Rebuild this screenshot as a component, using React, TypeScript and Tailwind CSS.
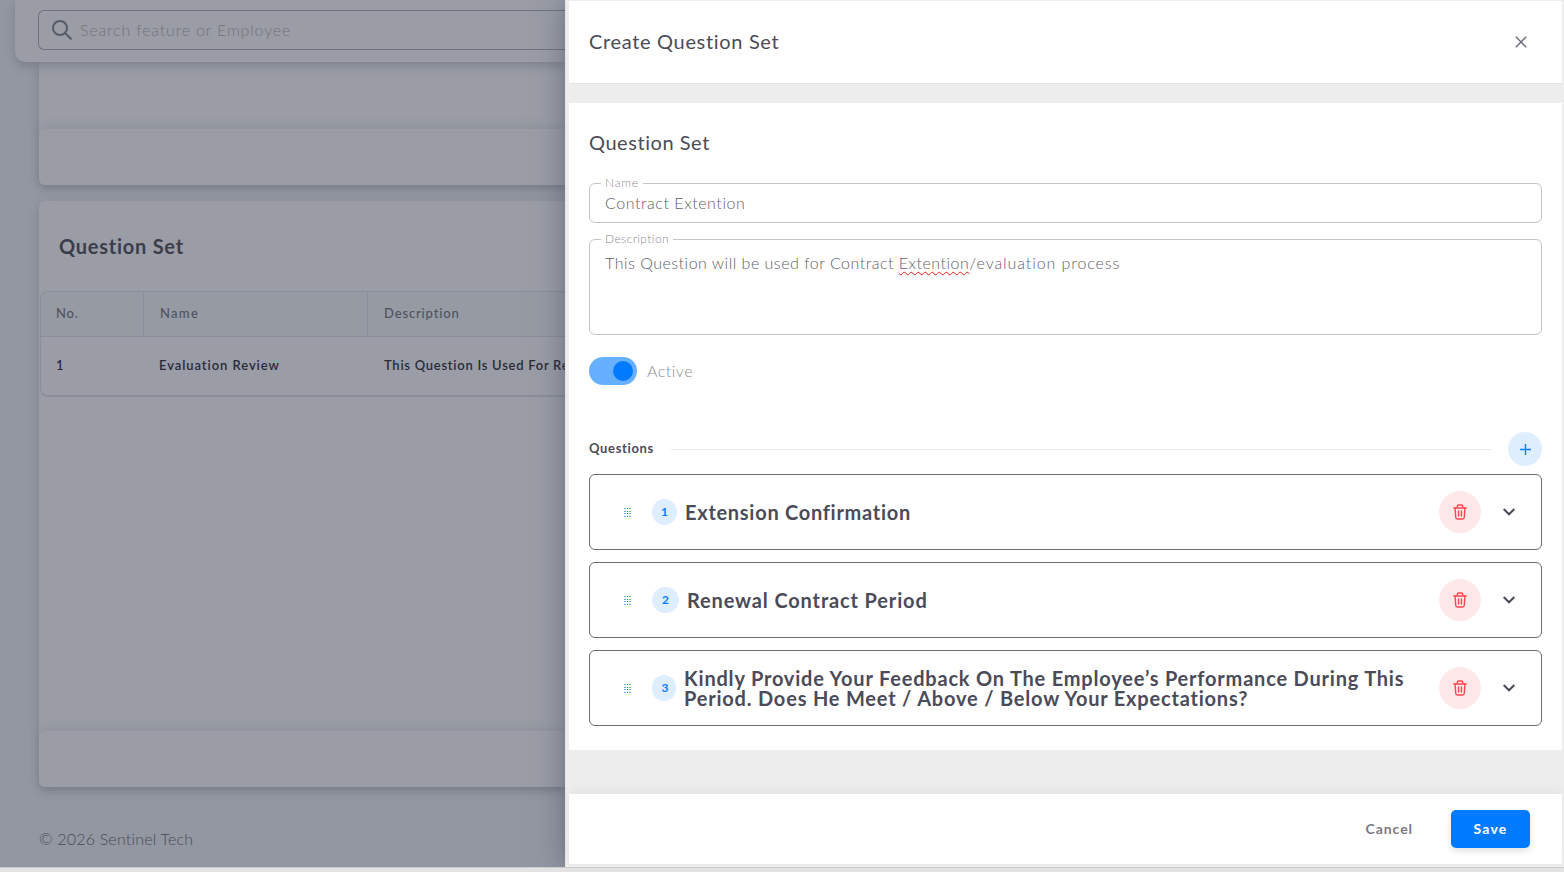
import { useState } from 'react';
import type { ReactNode } from 'react';

interface Question {
  title: string;
  badge: string;
  text: string;
}

const questions: Question[] = [
  { title: 'Extension Confirmation', badge: 'w-[25px]', text: 'tracking-[0.72px]' },
  { title: 'Renewal Contract Period', badge: 'w-[27px]', text: 'tracking-[0.85px]' },
  {
    title:
      'Kindly Provide Your Feedback On The Employee’s Performance During This Period. Does He Meet / Above / Below Your Expectations?',
    badge: 'w-[24px] pl-[2px]',
    text: 'tracking-[0.8px]',
  },
];

export default function App() {
  return (
    <div className="h-[872px] w-[1564px] overflow-hidden bg-[#e3e3e3] font-['Lato',sans-serif]">
      <div className="flex h-[867px] overflow-hidden">
        <Backdrop />
        <Drawer />
      </div>
      <div className="h-px bg-[#cccccc]" />
    </div>
  );
}

function Backdrop() {
  return (
    <div className="flex w-[565px] shrink-0 flex-col overflow-hidden bg-[#9397a2]">
      <header className="relative z-10 ml-[15px] h-[62px] shrink-0 rounded-bl-[10px] bg-[#9a9da6] pt-[10px] pl-[23px] shadow-[0_4px_10px_rgba(70,74,90,0.32)]">
        <div className="flex h-10 items-center rounded-l-[6px] border border-r-0 border-[#6f7282] pl-[13px]">
          <svg className="h-5 w-5 text-[#575a68]" viewBox="0 0 20 20" fill="none" stroke="currentColor" strokeWidth="2">
            <circle cx="8" cy="8" r="7" />
            <path d="m13 13 6.4 6.4" />
          </svg>
          <span className="ml-2 text-base font-light tracking-[0.82px] whitespace-nowrap text-[#70737f]">
            Search feature or Employee
          </span>
        </div>
      </header>

      <section className="ml-[39px] flex h-[123px] shrink-0 flex-col justify-end rounded-bl-[6px] bg-[#9a9da6] shadow-[0_4px_10px_rgba(70,74,90,0.32)]">
        <CardFooter />
      </section>

      <section className="mt-4 ml-[39px] flex h-[586px] shrink-0 flex-col rounded-l-[6px] bg-[#9a9da6] shadow-[0_4px_10px_rgba(70,74,90,0.32)]">
        <h2 className="flex h-[90px] items-center pb-px pl-5 text-xl font-bold tracking-[0.75px] text-[#3b3d4b]">
          Question Set
        </h2>
        <div className="ml-px rounded-l-[8px] border border-r-0 border-b-2 border-[#8b8e9a]">
          <div className="flex h-[45px] overflow-hidden rounded-tl-[7px] border-b border-[#8b8e9a] bg-[#969aa3] text-[13px] font-medium tracking-[0.85px] text-[#4f525f]">
            <div className="flex w-[103px] items-center border-r border-[#8b8e9a] pl-[15px]">No.</div>
            <div className="flex w-[224px] items-center border-r border-[#8b8e9a] pl-4 tracking-[1.3px]">Name</div>
            <div className="flex items-center pl-4">Description</div>
          </div>
          <div className="flex h-[58px] items-center overflow-hidden text-[13px] font-semibold tracking-[0.93px] whitespace-nowrap text-[#292b3b]">
            <div className="w-[103px] shrink-0 pl-[15px]">1</div>
            <div className="w-[224px] shrink-0 pl-[15px]">Evaluation Review</div>
            <div className="shrink-0 pl-4 tracking-[0.73px]">This Question Is Used For Re</div>
          </div>
        </div>
        <div className="mt-auto">
          <CardFooter />
        </div>
      </section>

      <footer className="mt-[41px] ml-[39px] text-base leading-[21px] font-light tracking-[0.2px] text-[#474955]">
        © 2026 Sentinel Tech
      </footer>
    </div>
  );
}

function CardFooter() {
  return <div className="h-14 rounded-l-[6px] bg-[#9a9da6] shadow-[0_-3px_8px_rgba(80,84,98,0.13)]" />;
}

function Drawer() {
  return (
    <aside className="relative z-20 flex w-[999px] shrink-0 flex-col border-l border-[#e5e5e5] bg-[#ededed] pt-px pr-[2px] pl-[3px] text-[#4b4b59] shadow-[0_0_28px_rgba(60,64,84,0.5)]">
      <header className="flex h-[83px] shrink-0 items-center justify-between border-b border-[#e3e3e3] bg-white pr-[35px] pl-5">
        <h1 className="pb-[2px] text-xl tracking-[0.67px]">Create Question Set</h1>
        <svg className="h-3 w-3 text-[#6a6a76]" viewBox="0 0 12 12" fill="none" stroke="currentColor" strokeWidth="1.4">
          <path d="m.8.8 10.4 10.4M11.2.8.8 11.2" />
        </svg>
      </header>

      <main className="mt-[19px] h-[647px] shrink-0 bg-white px-5 pt-[25px]">
        <h2 className="text-xl leading-7 tracking-[0.55px]">Question Set</h2>
        <Field label="Name" box="mt-[21px] h-[46px]" labelText="tracking-[0.8px]">
          <p className="pt-[4px] tracking-[0.55px]">Contract Extention</p>
        </Field>
        <Field label="Description" box="mt-[10px] h-[102px]" labelText="tracking-[0.4px]">
          <p className="pt-[8px]">
            This Question will be used for Contract{' '}
            <span className="underline decoration-[#ee1c1c] decoration-wavy decoration-1 underline-offset-[2px]">
              Extention
            </span>
            <span className="tracking-[0.92px]">/evaluation process</span>
          </p>
        </Field>
        <ActiveSwitch />
        <div className="mt-[47px] flex h-[34px] items-center">
          <h3 className="text-[13px] font-bold tracking-[0.65px]">Questions</h3>
          <div className="mr-4 ml-auto h-px w-[821px] bg-[#ebebeb]" />
          <button className="flex h-[34px] w-[34px] items-center justify-center rounded-full bg-[#deeeff] text-[#0a7cff]">
            <svg className="mt-px ml-px h-[11px] w-[11px]" viewBox="0 0 11 11" stroke="currentColor" strokeWidth="1.4">
              <path d="M5.5 0v11M0 5.5h11" />
            </svg>
          </button>
        </div>
        <ul className="mt-2 space-y-3">
          {questions.map((q, i) => (
            <QuestionRow key={q.title} question={q} index={i + 1} />
          ))}
        </ul>
      </main>

      <footer className="mt-11 flex h-[70px] shrink-0 items-center justify-end bg-white pr-8 text-sm font-bold shadow-[0_-4px_10px_rgba(0,0,0,0.04)]">
        <button className="mr-[38px] tracking-[0.95px] text-[#7a7a84]">Cancel</button>
        <button className="h-[38px] w-[79px] rounded-[5px] bg-[#007bff] tracking-[1.2px] text-white shadow-[0_3px_7px_rgba(0,0,0,0.12)]">
          Save
        </button>
      </footer>
    </aside>
  );
}

function Field({
  label,
  labelText,
  box,
  children,
}: {
  label: string;
  labelText: string;
  box: string;
  children: ReactNode;
}) {
  return (
    <fieldset
      className={`${box} rounded-[6px] border border-[#c5c5c8] pl-[11px] text-base font-light tracking-[0.5px] text-[#62626c]`}
    >
      <legend className={`${labelText} h-3 px-1 text-xs leading-3 text-[#8c8c94]`}>{label}</legend>
      <div className="pl-1 leading-5">{children}</div>
    </fieldset>
  );
}

function ActiveSwitch() {
  const [active, setActive] = useState(true);
  return (
    <div className="mt-[22px] flex h-7 items-center">
      <button
        role="switch"
        aria-checked={active}
        onClick={() => setActive(!active)}
        className={`flex h-7 w-12 items-center rounded-full px-1 ${active ? 'justify-end bg-[#66b0ff]' : 'bg-gray-300'}`}
      >
        <span className={`h-5 w-5 rounded-full ${active ? 'bg-[#007bff]' : 'bg-white'}`} />
      </button>
      <span className="ml-[10px] text-base font-light tracking-[0.5px] text-[#8c8c94]">Active</span>
    </div>
  );
}

function QuestionRow({ question, index }: { question: Question; index: number }) {
  return (
    <li className="flex h-[76px] items-center rounded-[6px] border border-[#6d6d76] pr-[26px] pl-[34px]">
      <DragHandle />
      <span
        className={`${question.badge} ml-[21px] flex h-[26px] shrink-0 items-center justify-center rounded-full bg-[#deeeff] text-xs font-bold text-[#0a7cff]`}
      >
        {index}
      </span>
      <h4 className={`${question.text} ml-2 w-[735px] pb-px text-xl leading-5 font-bold`}>{question.title}</h4>
      <button className="ml-auto flex h-[42px] w-[42px] shrink-0 items-center justify-center rounded-full bg-[#ffe8ea] text-[#ff4651]">
        <TrashIcon />
      </button>
      <svg className="ml-[22px] h-[8px] w-3 shrink-0" viewBox="0 0 12 8" fill="none" stroke="currentColor" strokeWidth="2">
        <path d="m.7 1 5.3 5.3L11.3 1" />
      </svg>
    </li>
  );
}

function DragHandle() {
  return (
    <svg className="h-[10px] w-[7px] shrink-0" viewBox="0 0 7 10" fill="#0a7cff">
      {[1, 4, 6, 9].map((y) => (
        <g key={y}>
          <rect x="0" y={y} width="2" height="1" opacity="0.6" />
          <rect x="3" y={y} width="1" height="1" />
          <rect x="5" y={y} width="2" height="1" opacity="0.6" />
        </g>
      ))}
    </svg>
  );
}

function TrashIcon() {
  return (
    <svg
      className="h-4 w-[14px]"
      viewBox="0 0 14 16"
      fill="none"
      stroke="currentColor"
      strokeWidth="1.4"
      strokeLinecap="round"
      strokeLinejoin="round"
    >
      <path d="M.8 4h12.4M4.3 3.8V2.3c0-.8.5-1.3 1.3-1.3h2.8c.8 0 1.3.5 1.3 1.3v1.5" />
      <path d="m2.1 4 .6 9.2c.1 1.1.8 1.8 1.8 1.8h5c1 0 1.7-.7 1.8-1.8l.6-9.2M5.6 7v5M8.4 7v5" />
    </svg>
  );
}
